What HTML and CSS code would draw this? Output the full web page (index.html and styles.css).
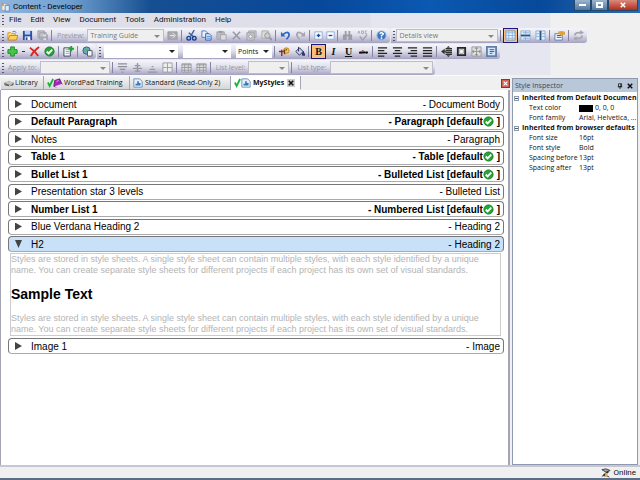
FILE: index.html
```
<!DOCTYPE html>
<html lang="en">
<head>
<meta charset="utf-8">
<title>Content - Developer</title>
<link rel="stylesheet" href="styles.css">
</head>
<body>
<svg class="defs" aria-hidden="true">
  <symbol id="logo" viewBox="0 0 12 12"><path d="M1 2h6v8H1z" fill="#f6f3e8" stroke="#a0a0a0"/><path d="M5 4h5v7H5z" fill="#dcecff" stroke="#4b81bd"/><path d="M1 1l3 3-2 1z" fill="#e96b24"/></symbol>
  <symbol id="open" viewBox="0 0 12 12"><path d="M1 10V3h3l1 1h4v2" fill="#ffe28a" stroke="#d39226"/><path d="M1 11l2-5h9l-2 5z" fill="#ffd05c" stroke="#c5811c"/><path d="M6 2q3-2 4 1" fill="none" stroke="#4773b8"/></symbol>
  <symbol id="save" viewBox="0 0 12 12"><path d="M1 1h10v10H1z" fill="#2d4da0"/><path d="M3 1h6v4H3z" fill="#b8d2f5"/><path d="M3 7h6v4H3z" fill="#f5f7ff"/><path d="M4 8h2v3H4z" fill="#2d4da0"/></symbol>
  <symbol id="saveall" viewBox="0 0 12 12"><path d="M1 1h7v7H1zM3 3h7v7H3z" fill="#c9c9d1" stroke="#9a9aa4"/><path d="M5 5h7v6H5z" fill="#a7a7b1"/><path d="M6 5h4v2H6zM7 9h3v2H7z" fill="#ddd"/></symbol>
  <symbol id="go" viewBox="0 0 12 12"><path d="M1 2h10v8H1z" fill="#aaaab2" stroke="#999"/><path d="M3 6h5M6 3l3 3-3 3" fill="none" stroke="#eee"/></symbol>
  <symbol id="cut" viewBox="0 0 12 12"><path d="M9 0L5 7M3 3l6 5" stroke="#3b5e9f" stroke-width="1.5"/><circle cx="3" cy="9" r="2" fill="none" stroke="#173e94" stroke-width="1.5"/><circle cx="9" cy="9" r="2" fill="none" stroke="#173e94" stroke-width="1.5"/></symbol>
  <symbol id="copy" viewBox="0 0 12 12"><path d="M1 1h4l2 2v5H1z" fill="#e8f2ff" stroke="#4a77bd"/><path d="M5 4h4l2 2v5H5z" fill="#d2e5ff" stroke="#2f62b4"/><path d="M6 7h4M6 9h4" stroke="#5b88c8"/></symbol>
  <symbol id="paste" viewBox="0 0 12 12"><path d="M1 2h8v8H1z" fill="#bcbcc4" stroke="#a2a2aa"/><path d="M3 1h4v2H3z" fill="#999"/><path d="M5 5h6v6H5z" fill="#ddd" stroke="#a2a2aa"/></symbol>
  <symbol id="xgray" viewBox="0 0 12 12"><path d="M2 2l8 8M10 2l-8 8" stroke="#95959e" stroke-width="1.5"/></symbol>
  <symbol id="pages" viewBox="0 0 12 12"><path d="M3 1h8v7H3z" fill="#ccc" stroke="#a2a2aa"/><path d="M1 3h8v8H1z" fill="#c9c9d0" stroke="#9c9ca4"/><circle cx="5" cy="7" r="2" fill="#eee" stroke="#999"/></symbol>
  <symbol id="search" viewBox="0 0 12 12"><path d="M1 1h7v8H1z" fill="#ddd" stroke="#aaa"/><circle cx="7" cy="6" r="3" fill="#ccc" stroke="#96969f"/><path d="M9 8l3 3" stroke="#96969f" stroke-width="2"/></symbol>
  <symbol id="undo" viewBox="0 0 12 12"><path d="M1 2v5h5z" fill="#2d68c4"/><path d="M3 5q6-5 7 0 0 3-3 5" fill="none" stroke="#2d68c4" stroke-width="2"/></symbol>
  <symbol id="redo" viewBox="0 0 12 12"><path d="M11 2v5H6z" fill="#a6a6b0"/><path d="M9 5Q3 0 2 5q0 3 3 5" fill="none" stroke="#a6a6b0" stroke-width="2"/></symbol>
  <symbol id="plusbox" viewBox="0 0 12 12"><path d="M2 2h8v8H2z" fill="#fff" stroke="#8cabd6"/><path d="M4 6h4M6 4v4" stroke="#174f8d" stroke-width="1.5"/></symbol>
  <symbol id="minusbox" viewBox="0 0 12 12"><path d="M2 2h8v8H2z" fill="#fff" stroke="#8cabd6"/><path d="M4 6h4" stroke="#174f8d" stroke-width="1.5"/></symbol>
  <symbol id="find" viewBox="0 0 12 12"><path d="M3 1h2v4H3zM7 1h2v4H7zM1 5h4v6H1zM7 5h4v6H7zM5 5h2v2H5z" fill="#9d9da7"/></symbol>
  <symbol id="spell" viewBox="0 0 12 12"><path d="M1 4l1-3 1 3M5 1v3h2V1zM11 1H9v3h2" fill="none" stroke="#aaaab3"/><path d="M3 7l3 4 5-6" fill="none" stroke="#a0a0aa" stroke-width="1.5"/></symbol>
  <symbol id="help" viewBox="0 0 12 12"><circle cx="6" cy="6" r="5" fill="#3977c6" stroke="#a0b8d8"/><path d="M4 4q2-2 4 0 0 1-2 2v1M6 8v2" fill="none" stroke="#fff" stroke-width="1.5"/></symbol>
  <symbol id="grid" viewBox="0 0 12 12"><path d="M1 1h10v10H1z" fill="#e7f2ff" stroke="#6897cd"/><path d="M1 3h10M1 6h10M1 9h10M4 1v10M8 1v10" stroke="#91b5df"/></symbol>
  <symbol id="hsplit" viewBox="0 0 12 12"><path d="M1 1h10v10H1z" fill="#e1efff" stroke="#8eaed1"/><path d="M1 6h10" stroke="#29557d" stroke-width="2"/><path d="M3 3h7M3 9h7M6 1v4M6 7v4" stroke="#8eaed1"/></symbol>
  <symbol id="vsplit" viewBox="0 0 12 12"><path d="M1 1h10v10H1z" fill="#e1efff" stroke="#8eaed1"/><path d="M6 1v10" stroke="#29557d" stroke-width="2"/><path d="M1 4h4M1 7h4M7 4h4M7 7h4" stroke="#8eaed1"/></symbol>
  <symbol id="props" viewBox="0 0 12 12"><path d="M1 4h8v7H1z" fill="#f7fbff" stroke="#557eae"/><path d="M3 6h5M3 8h5" stroke="#4d4d4d"/><path d="M4 2l4-1 4 1v3l-5 1z" fill="#dfa13a"/></symbol>
  <symbol id="refresh" viewBox="0 0 12 12"><path d="M2 6q0-4 7-3M10 6q0 4-7 3" fill="none" stroke="#a5a5ad" stroke-width="2"/><path d="M8 0l4 3-4 2zM4 7L0 9l4 3z" fill="#a5a5ad"/></symbol>
  <symbol id="add" viewBox="0 0 12 12"><path d="M4 1h4v3h3v4H8v3H4V8H1V4h3z" fill="#4bc649" stroke="#168b21"/></symbol>
  <symbol id="redx" viewBox="0 0 12 12"><path d="M1 2q5 3 9 9M11 1Q5 5 2 11" fill="none" stroke="#d92624" stroke-width="2"/></symbol>
  <symbol id="ok" viewBox="0 0 12 12"><circle cx="6" cy="6" r="5" fill="#25a536" stroke="#167821"/><path d="M3 6l2 2 4-4" fill="none" stroke="#fff" stroke-width="2"/></symbol>
  <symbol id="addpage" viewBox="0 0 12 12"><path d="M1 2h7v9H1z" fill="#f3f7fb" stroke="#34485b"/><path d="M3 4h4M3 6h4M3 8h4" stroke="#96aabd"/><path d="M9 0v6M6 3h6" stroke="#20a532" stroke-width="2"/></symbol>
  <symbol id="web" viewBox="0 0 12 12"><circle cx="5" cy="5" r="4" fill="#6baad7" stroke="#24567d"/><path d="M2 4q3-3 5 0-2 3-4 2" fill="#5bb66c"/><path d="M6 5h5v6H6z" fill="#f4f4f4" stroke="#4f5965"/></symbol>
  <symbol id="palette" viewBox="0 0 12 12"><circle cx="8" cy="5" r="3" fill="#f7c957" stroke="#c47d24"/><path d="M0 6h5M3 4v7M6 4v5" stroke="#8a3016" stroke-width="1.5"/><circle cx="8" cy="4" r="1" fill="#31873a"/></symbol>
  <symbol id="bucket" viewBox="0 0 12 12"><path d="M2 6l4-4 4 4-4 4z" fill="#cad2e6" stroke="#1c2758"/><path d="M5 1v5M10 6l2 4h-3z" fill="#264e9b" stroke="#1c2758"/></symbol>
  <symbol id="left" viewBox="0 0 12 12"><path d="M1 2h10M1 5h7M1 8h10M1 11h7" stroke="#222" stroke-width="1.5"/></symbol>
  <symbol id="center" viewBox="0 0 12 12"><path d="M1 2h10M3 5h6M1 8h10M3 11h6" stroke="#222" stroke-width="1.5"/></symbol>
  <symbol id="right" viewBox="0 0 12 12"><path d="M1 2h10M4 5h7M1 8h10M4 11h7" stroke="#222" stroke-width="1.5"/></symbol>
  <symbol id="full" viewBox="0 0 12 12"><path d="M1 2h10M1 5h10M1 8h10M1 11h10" stroke="#222" stroke-width="1.5"/></symbol>
  <symbol id="top" viewBox="0 0 12 12"><path d="M1 2h10M1 5h10M3 8h6M5 11h2" stroke="#8f8f9a" stroke-width="1.5"/></symbol>
  <symbol id="mid" viewBox="0 0 12 12"><path d="M1 7h10M3 4h6M3 10h6M6 1v10" stroke="#96969f" stroke-width="1.5"/></symbol>
  <symbol id="low" viewBox="0 0 12 12"><path d="M1 11h10M3 8h6M5 5h2" stroke="#96969f" stroke-width="1.5"/></symbol>
  <symbol id="cells" viewBox="0 0 12 12"><path d="M1 1h10v10H1zM1 6h10M6 1v10" fill="#eee" stroke="#9c9ca6"/></symbol>
  <symbol id="table" viewBox="0 0 12 12"><path d="M1 2h10v9H1z" fill="#ddd" stroke="#9999a3"/><path d="M1 3h10M1 6h10M1 9h10M4 2v9M8 2v9" stroke="#9999a3"/></symbol>
  <symbol id="spread" viewBox="0 0 12 12"><path d="M3 6h2M5 3h7M5 5h7M5 7h7M5 9h7" stroke="#333" stroke-width="1.5"/><path d="M4 3v6L0 6zM8 0l2 2H6zM8 12l2-2H6z" fill="#333"/></symbol>
  <symbol id="frame" viewBox="0 0 12 12"><path d="M2 2h8v8H2z" fill="#eee" stroke="#272727" stroke-width="2"/><path d="M4 4h4v4H4z" fill="#fff" stroke="#aaa"/></symbol>
  <symbol id="move" viewBox="0 0 12 12"><path d="M1 1h10v10H1z" fill="#ddd" stroke="#999"/><path d="M6 2v8M2 6h8" stroke="#96969b"/><path d="M6 1l2 2H4zM6 11l2-2H4zM1 6l2-2v4zM11 6L9 4v4z" fill="#888"/></symbol>
  <symbol id="form" viewBox="0 0 12 12"><path d="M1 1h10v10H1z" fill="#d5e8ff" stroke="#6280a5" stroke-width="2"/><path d="M4 4h5M4 6h5M4 8h3" stroke="#39577c"/></symbol>
  <symbol id="disk" viewBox="0 0 12 12"><path d="M0 6l6-2 6 2-1 3-5 1-5-1z" fill="#666"/><path d="M0 6l6-2 6 2-5 2z" fill="#c6c6c6"/><path d="M6 9l3-1" stroke="#eee"/></symbol>
  <symbol id="tick" viewBox="0 0 8 12"><path d="M1 6l2 4 4-8" fill="none" stroke="#14b735" stroke-width="2"/></symbol>
  <symbol id="book" viewBox="0 0 12 12"><path d="M2 3l6-2 3 7-6 3-4-1z" fill="#a32ab8" stroke="#671379"/><path d="M2 10l3-1 6-2v2l-6 3z" fill="#e9dff1"/><path d="M4 4l3-1" stroke="#e1a5ed"/></symbol>
  <symbol id="style" viewBox="0 0 12 12"><path d="M1 1h7l3 3v7H1z" fill="#e2effc" stroke="#5c8ab9"/><path d="M3 9h6V6H7V4H5v3H3z" fill="#3876b8"/></symbol>
  <symbol id="connect" viewBox="0 0 12 12"><path d="M1 2l5-1 5 2-5 2zM1 10l4-2 5 3" fill="#aaa" stroke="#333"/><path d="M9 4L3 9" stroke="#333" stroke-width="2"/><path d="M5 6h3v4H5z" fill="#edae3a"/></symbol>
  <symbol id="pin" viewBox="0 0 8 8"><path d="M2 1h4v4H2zM1 5h6M4 5v3M5 1v4" fill="#c5d2df" stroke="#111"/></symbol>
  <symbol id="close" viewBox="0 0 8 8"><path d="M1 1l6 6M7 1L1 7" stroke="currentColor" stroke-width="2"/></symbol>
</svg>

<div class="app">
  <header class="titlebar">
    <svg class="icon"><use href="#logo"/></svg>
    <h1>Content - Developer</h1>
    <div class="window-buttons">
      <button class="win" aria-label="Minimize"><span class="min"></span></button><button class="win" aria-label="Restore"><span class="restore"></span></button><button class="win quit" aria-label="Close window"><svg><use href="#close"/></svg></button>
    </div>
  </header>

  <div class="bars">
    <nav class="menu"><i class="grip"></i><button>File</button><button>Edit</button><button>View</button><button>Document</button><button>Tools</button><button>Administration</button><button>Help</button></nav>

    <div class="bar-row">
      <div class="toolbar"><i class="grip"></i>
        <button class="tool" aria-label="Open"><svg><use href="#open"/></svg></button><button class="tool" aria-label="Save"><svg><use href="#save"/></svg></button><button class="tool" aria-label="Save all"><svg><use href="#saveall"/></svg></button>
        <i class="sep"></i><label for="preview">Preview:</label>
        <span class="combo off w-preview"><select id="preview"><option>Training Guide</option></select></span>
        <button class="tool" aria-label="Show preview"><svg><use href="#go"/></svg></button><i class="sep"></i>
        <button class="tool" aria-label="Cut"><svg><use href="#cut"/></svg></button><button class="tool" aria-label="Copy"><svg><use href="#copy"/></svg></button><button class="tool" aria-label="Paste"><svg><use href="#paste"/></svg></button><button class="tool" aria-label="Delete"><svg><use href="#xgray"/></svg></button><button class="tool" aria-label="Versions"><svg><use href="#pages"/></svg></button><button class="tool" aria-label="Look up"><svg><use href="#search"/></svg></button>
        <i class="sep"></i><button class="tool" aria-label="Undo"><svg><use href="#undo"/></svg></button><button class="tool" aria-label="Redo"><svg><use href="#redo"/></svg></button>
        <i class="sep"></i><button class="tool slim" aria-label="Expand"><svg><use href="#plusbox"/></svg></button><button class="tool slim" aria-label="Collapse"><svg><use href="#minusbox"/></svg></button>
        <i class="sep"></i><button class="tool" aria-label="Find"><svg><use href="#find"/></svg></button><button class="tool" aria-label="Spelling"><svg><use href="#spell"/></svg></button>
        <i class="sep"></i><button class="tool" aria-label="Help"><svg><use href="#help"/></svg></button>
      </div>
      <div class="toolbar"><i class="grip"></i>
        <span class="combo off w-view"><select aria-label="View"><option>Details view</option></select></span>
        <i class="sep"></i><button class="tool on" aria-label="Single view"><svg><use href="#grid"/></svg></button><button class="tool" aria-label="Split rows"><svg><use href="#hsplit"/></svg></button><button class="tool" aria-label="Split columns"><svg><use href="#vsplit"/></svg></button>
        <i class="sep"></i><button class="tool" aria-label="Properties"><svg><use href="#props"/></svg></button><i class="sep"></i><button class="tool" aria-label="Refresh"><svg><use href="#refresh"/></svg></button>
      </div>
    </div>

    <div class="bar-row">
      <div class="toolbar"><i class="grip"></i>
        <button class="tool" aria-label="Add"><svg><use href="#add"/></svg></button><button class="caret" aria-label="Add options"></button><button class="tool" aria-label="Remove"><svg><use href="#redx"/></svg></button><button class="tool" aria-label="Accept"><svg><use href="#ok"/></svg></button>
        <i class="sep"></i><button class="tool" aria-label="New page"><svg><use href="#addpage"/></svg></button><i class="sep"></i><button class="tool" aria-label="Publish"><svg><use href="#web"/></svg></button>
      </div>
      <div class="toolbar"><i class="grip"></i>
        <span class="combo w-font"><select aria-label="Font"><option></option></select></span>
        <span class="combo w-size"><select aria-label="Size"><option></option></select></span>
        <span class="combo w-unit"><select aria-label="Unit"><option>Points</option></select></span>
        <i class="sep"></i><button class="tool" aria-label="Text color"><svg><use href="#palette"/></svg></button><button class="tool" aria-label="Fill color"><svg><use href="#bucket"/></svg></button>
        <i class="sep"></i><button class="tool on glyph">B</button><button class="tool glyph italic">I</button><button class="tool glyph under">U</button><button class="tool glyph strike">abc</button>
        <i class="sep"></i><button class="tool" aria-label="Align left"><svg><use href="#left"/></svg></button><button class="tool" aria-label="Center"><svg><use href="#center"/></svg></button><button class="tool" aria-label="Align right"><svg><use href="#right"/></svg></button><button class="tool" aria-label="Justify"><svg><use href="#full"/></svg></button>
        <i class="sep"></i><button class="tool" aria-label="Spacing"><svg><use href="#spread"/></svg></button><button class="tool" aria-label="Border"><svg><use href="#frame"/></svg></button><button class="tool" aria-label="Position"><svg><use href="#move"/></svg></button><button class="tool" aria-label="Form"><svg><use href="#form"/></svg></button>
      </div>
    </div>

    <div class="bar-row">
      <div class="toolbar"><i class="grip"></i>
        <label for="apply">Apply to:</label><span class="combo off w-apply"><select id="apply"><option></option></select></span>
        <i class="sep"></i><button class="tool" aria-label="Align top"><svg><use href="#top"/></svg></button><button class="tool" aria-label="Align middle"><svg><use href="#mid"/></svg></button><button class="tool" aria-label="Align bottom"><svg><use href="#low"/></svg></button><button class="tool" aria-label="Cell borders"><svg><use href="#cells"/></svg></button>
        <i class="sep"></i><button class="tool" aria-label="Table header"><svg><use href="#table"/></svg></button><button class="tool" aria-label="Table"><svg><use href="#table"/></svg></button>
        <i class="sep"></i><label for="level">List level:</label><span class="combo off w-level"><select id="level"><option></option></select></span>
        <i class="sep"></i><label for="type">List type:</label><span class="combo off w-type"><select id="type"><option></option></select></span>
      </div>
    </div>
  </div>

  <div class="workspace">
    <section class="editor">
      <div class="tabs">
        <button class="tab t-library"><svg class="icon"><use href="#disk"/></svg>Library</button>
        <button class="tab t-wordpad"><svg class="tick"><use href="#tick"/></svg><svg class="icon"><use href="#book"/></svg>WordPad Training</button>
        <button class="tab t-standard"><svg class="icon"><use href="#style"/></svg>Standard (Read-Only 2)</button>
        <div class="tab current"><svg class="tick"><use href="#tick"/></svg><svg class="icon"><use href="#style"/></svg>MyStyles<button class="tab-close" aria-label="Close tab"><svg><use href="#close"/></svg></button></div>
        <button class="close-all" aria-label="Close editor"><svg><use href="#close"/></svg></button>
      </div>
      <main class="sheet">
        <div class="styles">
          <button class="style"><i class="arrow"></i>Document<span>- Document Body</span></button>
          <button class="style strong"><i class="arrow"></i>Default Paragraph<span>- Paragraph [default<svg><use href="#ok"/></svg> ]</span></button>
          <button class="style"><i class="arrow"></i>Notes<span>- Paragraph</span></button>
          <button class="style strong"><i class="arrow"></i>Table 1<span>- Table [default<svg><use href="#ok"/></svg> ]</span></button>
          <button class="style strong"><i class="arrow"></i>Bullet List 1<span>- Bulleted List [default<svg><use href="#ok"/></svg> ]</span></button>
          <button class="style"><i class="arrow"></i>Presentation star 3 levels<span>- Bulleted List</span></button>
          <button class="style strong"><i class="arrow"></i>Number List 1<span>- Numbered List [default<svg><use href="#ok"/></svg> ]</span></button>
          <button class="style"><i class="arrow"></i>Blue Verdana Heading 2<span>- Heading 2</span></button>
          <button class="style open"><i class="arrow down"></i>H2<span>- Heading 2</span></button>
        </div>
        <article class="sample">
          <p>Styles are stored in style sheets. A single style sheet can contain multiple styles, with each style identified by a unique<br>name. You can create separate style sheets for different projects if each project has its own set of visual standards.</p>
          <h2>Sample Text</h2>
          <p>Styles are stored in style sheets. A single style sheet can contain multiple styles, with each style identified by a unique<br>name. You can create separate style sheets for different projects if each project has its own set of visual standards.</p>
        </article>
        <button class="style"><i class="arrow"></i>Image 1<span>- Image</span></button>
      </main>
    </section>

    <aside class="inspector">
      <header><h2>Style Inspector</h2><button aria-label="Pin"><svg><use href="#pin"/></svg></button><button aria-label="Close inspector"><svg><use href="#close"/></svg></button></header>
      <div class="props">
        <h3><i class="fold"></i>Inherited from Default Documen</h3>
        <table>
          <tr><th>Text color</th><td><i class="swatch"></i>0, 0, 0</td></tr>
          <tr><th>Font family</th><td>Arial, Helvetica, ...</td></tr>
        </table>
        <h3><i class="fold"></i>Inherited from browser defaults</h3>
        <table>
          <tr><th>Font size</th><td>16pt</td></tr>
          <tr><th>Font style</th><td>Bold</td></tr>
          <tr><th>Spacing before</th><td>13pt</td></tr>
          <tr><th>Spacing after</th><td>13pt</td></tr>
        </table>
      </div>
    </aside>
  </div>
  <footer class="status"><svg class="icon"><use href="#connect"/></svg>Online</footer>
</div>
</body>
</html>
```
FILE: styles.css
```
* { box-sizing: border-box; }
body { margin: 0; font: 7px/10px "Open Sans", "Noto Sans", sans-serif; color: #111; }
button, select { font: inherit; color: inherit; border: 0; padding: 0; margin: 0; background: none; }
h1, h2, h3, p { margin: 0; font-size: inherit; font-weight: inherit; }
svg { display: block; flex: none; }
.defs { position: absolute; width: 0; height: 0; }
.icon { width: 10px; height: 10px; }
.app { display: flex; flex-direction: column; min-height: 100vh; background: #f0f0f0; border-bottom: 2px solid #5c6f86; }
.titlebar, .menu, .status { font-family: Roboto, sans-serif; font-size: 8px; }

.titlebar { display: flex; align-items: center; height: 13px; padding-left: 1px; gap: 2px; background: linear-gradient(90deg, #8fb5dd 0, #6f9fd0 70px, #164f91 150px, #07489a 320px, #0b59b2 430px, #07499a 540px, #2a6cb0 100%); }
.titlebar h1 { line-height: 12px; color: #000; }
.window-buttons { display: flex; align-self: flex-start; margin-left: auto; padding-right: 2px; }
.win { display: grid; place-items: center; width: 17px; height: 11px; border: 1px solid #23496f; border-top: 0; background: linear-gradient(#9cb5cf, #50789f); }
.win.quit { width: 30px; color: #fff; background: linear-gradient(#d98a7c, #b22e1a); }
.win svg { width: 6px; height: 6px; }
.min { width: 7px; height: 2px; background: #fff; }
.restore { width: 7px; height: 6px; border: 2px solid #fff; }

.bars { display: flex; flex-direction: column; gap: 1px; height: 62px; background: linear-gradient(90deg, #e6e6f1 550px, #f0f0f0 551px); }
.menu { display: flex; align-items: center; height: 14px; gap: 9px; padding-left: 1px; background: linear-gradient(90deg, #dfdfe9 370px, #e6e6f1 371px, #e6e6f1 550px, #f0f0f0 551px); }
.menu .grip { margin-right: -4px; }
.grip { flex: none; width: 2px; height: 10px; margin: 0 1px; background: repeating-linear-gradient(#55556f 0 1px, transparent 1px 3px); }
.bar-row { display: flex; gap: 1px; }
.toolbar { display: flex; align-items: center; height: 15px; padding: 0 1px; border-radius: 0 3px 3px 0; background: linear-gradient(#f5f5fa, #e1e0ec 45%, #a5a2c1); }
.toolbar label { padding: 0 3px; color: #96969f; }
.tool { display: grid; place-items: center; width: 15px; height: 15px; }
.tool svg { width: 11px; height: 11px; }
.tool.slim { width: 12px; }
.tool.on { border: 1px solid #17177c; background: #fcbf79; }
.sep { flex: none; width: 1px; height: 11px; margin: 0 2px 0 1px; background: #8583a4; }
.glyph { font: bold 10px/12px "Liberation Serif", serif; }
.italic { font-style: italic; }
.under { text-decoration: underline; }
.strike { font-size: 6px; text-decoration: line-through; }
.caret { width: 7px; height: 10px; background: linear-gradient(#333, #333) center / 3px 1px no-repeat; }
.combo { display: flex; position: relative; height: 13px; margin-right: 5px; background: #fff; }
.combo select { width: 100%; appearance: none; padding: 0 2px; border-radius: 0; }
.combo::after { content: ""; position: absolute; right: 3px; top: 5px; border: 3px solid transparent; border-top-color: #222; border-bottom: 0; pointer-events: none; }
.combo.off { margin-right: 1px; color: #777; background: #efefef; border: 1px solid #bdbdc9; }
.combo.off::after { border-top-color: #888; }
.w-preview { width: 77px; }
.w-view { width: 102px; }
.w-font { width: 74px; margin-left: 2px; }
.w-size { width: 48px; }
.combo.w-unit { width: 36px; margin-right: 1px; }
.w-apply { width: 70px; }
.w-level { width: 41px; }
.w-type { width: 103px; }

.workspace { display: flex; flex: 1; gap: 2px; padding-right: 2px; border-bottom: 2px solid #c6c6d6; }
.editor { display: flex; flex-direction: column; flex: 1; min-width: 0; }
.tabs { display: flex; align-items: stretch; height: 15px; padding-left: 1px; border-top: 1px solid #fafafa; }
.tab { display: flex; align-items: center; gap: 1px; padding: 0 3px; white-space: nowrap; border: solid #a5a5b5; border-width: 0 1px 1px 0; background: linear-gradient(#f7f7f7, #d6d6d6); }
.t-library { width: 43px; }
.t-wordpad { width: 86px; }
.t-standard { width: 101px; gap: 2px; }
.tab .tick { width: 7px; height: 11px; margin-right: -2px; }
.tab.current { width: 70px; gap: 2px; font-weight: bold; background: #fff; border-bottom-color: #fff; }
.tab-close { margin-left: 1px; width: 8px; height: 8px; padding: 1px; background: #ccc; }
.tab-close svg { width: 6px; height: 6px; }
.close-all { align-self: center; width: 9px; height: 9px; margin-left: auto; padding: 1px; border: 1px solid #84373a; background: #cf6456; color: #fff; }
.close-all svg { width: 5px; height: 5px; }

.sheet { flex: 1; padding: 6px 4px 6px 7px; border: solid #a4a4b5; border-width: 0 2px 0 1px; background: #fff; font: 10px/13px "Liberation Sans", Arial, sans-serif; }
.styles { display: flex; flex-direction: column; justify-content: space-between; height: 156px; }
.style { display: flex; align-items: center; width: 100%; height: 16px; padding: 0 3px 0 6px; border: 1px solid #777; border-bottom-color: #aaa; border-radius: 4px; background: #fff; color: #000; }
.style span { display: flex; align-items: center; margin-left: auto; white-space: pre; }
.style svg { width: 11px; height: 11px; }
.strong { font-weight: bold; }
.open { background: #c8e0f8; }
.arrow { width: 7px; height: 8px; margin-right: 9px; background: #444; clip-path: polygon(0 0, 100% 50%, 0 100%); }
.arrow.down { clip-path: polygon(0 0, 100% 0, 50% 100%); }
.sample { margin: 1px 3px 2px 2px; border: 1px solid #ccc; font-size: 9px; line-height: 11px; color: #b4b4b4; white-space: nowrap; }
.sample h2 { margin: 10px 0; font-size: 14px; line-height: 17px; font-weight: bold; color: #000; }

.inspector { width: 126px; margin-top: 3px; border: 1px solid #8f9bac; background: #fff; }
.inspector header { display: flex; align-items: center; gap: 4px; height: 13px; padding: 0 4px 0 2px; background: #b9c8d9; }
.inspector header h2 { margin-right: auto; color: #3c4654; }
.inspector header svg { width: 6px; height: 6px; }
.props { padding: 1px 0; overflow: hidden; }
.props h3 { display: flex; align-items: center; gap: 3px; height: 10px; font-weight: bold; white-space: nowrap; }
.fold { flex: none; width: 5px; height: 5px; margin-left: 1px; border: 1px solid #8b9bb0; background: linear-gradient(#555, #555) center / 3px 1px no-repeat; }
.props table { border-collapse: collapse; table-layout: fixed; width: 100%; }
.props th { width: 66px; padding: 0 0 0 16px; text-align: left; font-weight: normal; white-space: nowrap; }
.props td { padding: 0; white-space: nowrap; }
.swatch { display: inline-block; width: 14px; height: 7px; margin: 0 2px 0 0; vertical-align: middle; background: #000; }
.status { display: flex; align-items: center; justify-content: flex-end; gap: 3px; height: 11px; padding-right: 4px; }
```
